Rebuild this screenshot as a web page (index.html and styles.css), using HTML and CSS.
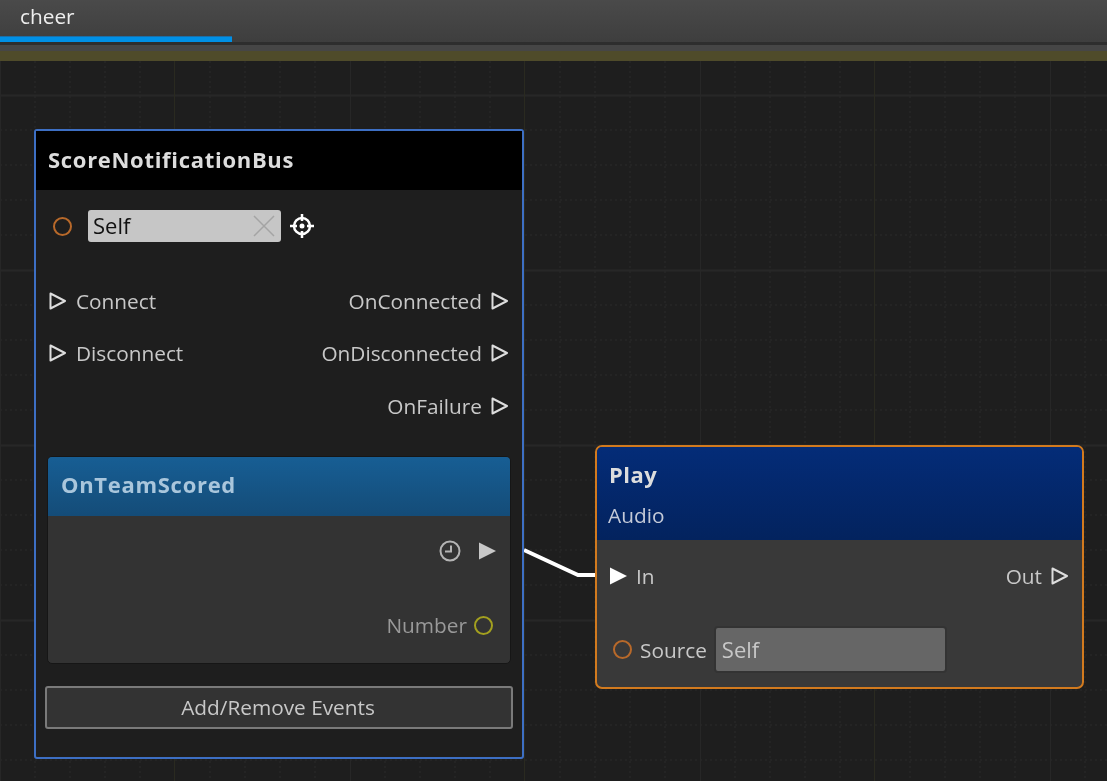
FILE: index.html
```html
<!DOCTYPE html>
<html lang="en">

<head>
    <meta charset="UTF-8">
    <title>cheer</title>
    <link rel="stylesheet" href="styles.css">
</head>

<body>
    <svg class="defs" width="0" height="0">
        <defs>
            <symbol id="pin-hollow" viewBox="0 0 18 18">
                <path d="M1.500 1.500 L16 9 L1.500 16.500 Z" fill="none" stroke="currentColor" stroke-width="2" stroke-linejoin="round" />
            </symbol>
            <symbol id="pin-solid" viewBox="0 0 18 18">
                <path d="M1 0.500 L18 9 L1 17.500 Z" fill="currentColor" />
            </symbol>
        </defs>
    </svg>

    <div class="tabbar">
        <div class="tab">cheer</div>
    </div>
    <div class="strip"></div>
    <div class="strip-olive"></div>

    <div class="canvas">
        <svg class="grid" width="1107" height="720">
            <defs>
                <pattern id="grid-tile" width="350" height="175" patternUnits="userSpaceOnUse">
                    <path class="dots" d="M35 0V175M70 0V175M105 0V175M140 0V175M210 0V175M245 0V175M280 0V175M315 0V175" />
                    <path class="dots" d="M0 69H350M0 104H350M0 139H350M0 174H350" />
                    <path class="major" d="M0 34.500H350" />
                    <path class="major" d="M0 0V175" />
                    <path class="major-olive" d="M174.500 0V175" />
                </pattern>
            </defs>
            <rect width="1107" height="720" fill="url(#grid-tile)" />
        </svg>

        <svg class="wire" width="1107" height="720">
            <path d="M524 489 L578 514 L596 514" />
        </svg>

        <div class="node node-bus">
            <div class="node-title">ScoreNotificationBus</div>
            <div class="self-row">
                <span class="port port-orange"></span>
                <div class="self-input">
                    <span>Self</span>
                    <svg class="clear" width="22" height="22" viewBox="0 0 22 22">
                        <path d="M1 1 L21 21 M21 1 L1 21" />
                    </svg>
                </div>
                <svg class="target" width="24" height="24" viewBox="0 0 24 24">
                    <circle cx="12" cy="12" r="8" />
                    <circle class="target-dot" cx="12" cy="12" r="2.500" />
                    <path d="M12 0V7M12 17V24M0 12H7M17 12H24" />
                </svg>
            </div>
            <div class="pin-row">
                <div class="pin-side">
                    <svg class="pin" width="18" height="18"><use href="#pin-hollow" /></svg>
                    <span>Connect</span>
                </div>
                <div class="pin-side">
                    <span>OnConnected</span>
                    <svg class="pin" width="18" height="18"><use href="#pin-hollow" /></svg>
                </div>
            </div>
            <div class="pin-row">
                <div class="pin-side">
                    <svg class="pin" width="18" height="18"><use href="#pin-hollow" /></svg>
                    <span>Disconnect</span>
                </div>
                <div class="pin-side">
                    <span>OnDisconnected</span>
                    <svg class="pin" width="18" height="18"><use href="#pin-hollow" /></svg>
                </div>
            </div>
            <div class="pin-row">
                <div></div>
                <div class="pin-side">
                    <span>OnFailure</span>
                    <svg class="pin" width="18" height="18"><use href="#pin-hollow" /></svg>
                </div>
            </div>

            <div class="event">
                <div class="event-title">OnTeamScored</div>
                <div class="event-row">
                    <svg class="clock" width="22" height="22" viewBox="0 0 22 22">
                        <circle cx="11" cy="11" r="9.500" />
                        <path d="M12 5.500V11.500H6" />
                    </svg>
                    <svg class="pin pin-dim" width="18" height="18"><use href="#pin-solid" /></svg>
                </div>
                <div class="event-row event-number">
                    <span>Number</span>
                    <span class="port port-yellow"></span>
                </div>
            </div>
            <div class="event-button">Add/Remove Events</div>
        </div>

        <div class="node node-play">
            <div class="play-title">
                <div class="play-name">Play</div>
                <div class="play-sub">Audio</div>
            </div>
            <div class="play-row">
                <div class="pin-side">
                    <svg class="pin pin-white" width="18" height="18"><use href="#pin-solid" /></svg>
                    <span>In</span>
                </div>
                <div class="pin-side">
                    <span>Out</span>
                    <svg class="pin" width="18" height="18"><use href="#pin-hollow" /></svg>
                </div>
            </div>
            <div class="source-row">
                <span class="port port-orange"></span>
                <span class="source-label">Source</span>
                <div class="source-input">Self</div>
            </div>
        </div>
    </div>
</body>

</html>
```

FILE: styles.css
```css
* {
    margin: 0;
    padding: 0;
    box-sizing: border-box;
}
html,
body {
    height: 100%;
}
html {
    background: #1e1e1e;
    overflow: hidden;
}
body {
    overflow: hidden;
    background: #1e1e1e;
    color: #c8c8c8;
    font-family: "Open Sans", sans-serif;
    font-size: 20.8px;
    /* the reference is an upscaled capture, everything is a bit soft */
    filter: blur(0.5px);
}
.defs {
    display: block;
    height: 0;
}
.tabbar {
    height: 42px;
    background: linear-gradient(#4a4a4a, #3e3e3e);
}
.tab {
    width: 232px;
    height: 42px;
    padding-left: 20px;
    background: linear-gradient(#1b6ea8 1px, #0090e6 1px) left bottom / 100% 6px no-repeat;
    line-height: 33px;
    color: #eee;
}
.strip {
    height: 9px;
    background: #464646;
    border-top: 3px solid #2e2e2e;
}
.strip-olive {
    height: 10px;
    background: #4f4b2a;
}

/* graph canvas */
.canvas {
    position: relative;
    height: 720px;
    background: #1e1e1e;
}
.grid,
.wire {
    position: absolute;
    left: 0;
    top: 0;
}
.dots {
    fill: none;
    stroke: #292929;
    stroke-dasharray: 2 3;
}
.major {
    fill: none;
    stroke: #272727;
    stroke-width: 2;
}
.major-olive {
    fill: none;
    stroke: #2a2a20;
    stroke-width: 1;
}
.wire path {
    fill: none;
    stroke: #fff;
    stroke-width: 4;
}

/* nodes */
.node {
    position: absolute;
}
.node-bus {
    left: 34px;
    top: 68px;
    width: 490px;
    height: 630px;
    background: #1e1e1e;
    border: 2px solid #3d6fc4;
    border-radius: 3px;
}
.node-title {
    height: 59px;
    padding-left: 12px;
    background: #000;
    color: #ddd;
    font-size: 22px;
    font-weight: 700;
    letter-spacing: 0.700px;
    line-height: 56px;
}
.self-row {
    display: flex;
    align-items: center;
    height: 32px;
    margin-top: 20px;
    padding-left: 17px;
}
.port {
    flex: none;
    width: 19px;
    height: 19px;
    border: 2px solid #b8692a;
    border-radius: 50%;
}
.port-yellow {
    border-color: #a3a01f;
}
.self-input {
    display: flex;
    justify-content: space-between;
    align-items: center;
    width: 193px;
    height: 32px;
    margin-left: 16px;
    padding: 0 6px 2px 5px;
    background: #c6c6c6;
    border-radius: 3px;
    color: #111;
    font-size: 22px;
}
.clear {
    margin-top: 2px;
}
.clear path {
    fill: none;
    stroke: #a4a4a4;
    stroke-width: 1.500;
}
.target {
    margin-left: 9px;
}
.target circle,
.target path {
    fill: none;
    stroke: #fff;
    stroke-width: 2.500;
}
.target .target-dot {
    fill: #fff;
    stroke: none;
}
.pin-row {
    display: flex;
    justify-content: space-between;
    align-items: center;
    height: 52.500px;
    padding: 0 13px;
}
.pin-row:nth-child(3) {
    margin-top: 32.500px;
}
.pin-side {
    display: flex;
    align-items: center;
    gap: 9px;
}
.pin {
    flex: none;
    color: #ddd;
}
.pin-dim {
    color: #c8c8c8;
}
.pin-white {
    color: #fff;
}
.event {
    height: 208px;
    margin: 24px 11px 0;
    background: #333;
    border: 1px solid #161616;
    border-radius: 5px;
    overflow: hidden;
}
.event-title {
    height: 59px;
    padding-left: 13px;
    background: linear-gradient(#175e94, #144c78);
    color: #a9c6dc;
    font-size: 22px;
    font-weight: 700;
    letter-spacing: 0.700px;
    line-height: 54px;
}
.event-row {
    display: flex;
    justify-content: flex-end;
    align-items: center;
    gap: 17px;
    height: 30px;
    margin-top: 20px;
    padding-right: 14px;
}
.clock circle,
.clock path {
    fill: none;
    stroke: #b4b4b4;
    stroke-width: 2;
}
.event-number {
    gap: 7px;
    margin-top: 44px;
    padding-right: 17px;
    color: #999;
}
.event-button {
    height: 43px;
    margin: 22px 9px 0;
    padding-right: 2px;
    background: #333;
    border: 2px solid #7a7a7a;
    border-radius: 3px;
    text-align: center;
    line-height: 39px;
}

.node-play {
    left: 595px;
    top: 384px;
    width: 489px;
    height: 244px;
    background: #393939;
    border: 2px solid #d27a1e;
    border-radius: 7px;
    overflow: hidden;
}
.play-title {
    height: 93px;
    padding: 12px 11px 0;
    background: linear-gradient(#042c78, #03235e);
    color: #ddd;
}
.play-name {
    margin-left: 1px;
    font-size: 22px;
    font-weight: 700;
    letter-spacing: 0.500px;
    line-height: 30px;
}
.play-sub {
    margin-top: 11px;
    color: #c4cad8;
    line-height: 30px;
}
.play-row {
    display: flex;
    justify-content: space-between;
    align-items: center;
    height: 30px;
    margin-top: 21px;
    padding: 0 13px 0 12px;
}
.source-row {
    display: flex;
    align-items: center;
    height: 45px;
    margin-top: 36px;
    padding-left: 16px;
}
.source-label {
    margin-left: 8px;
}
.source-input {
    flex: none;
    width: 233px;
    height: 47px;
    margin-left: 7px;
    padding-left: 6px;
    background: #666;
    border: 2px solid #333;
    border-radius: 4px;
    color: #c8c8c8;
    font-size: 22px;
    line-height: 42px;
}
```
